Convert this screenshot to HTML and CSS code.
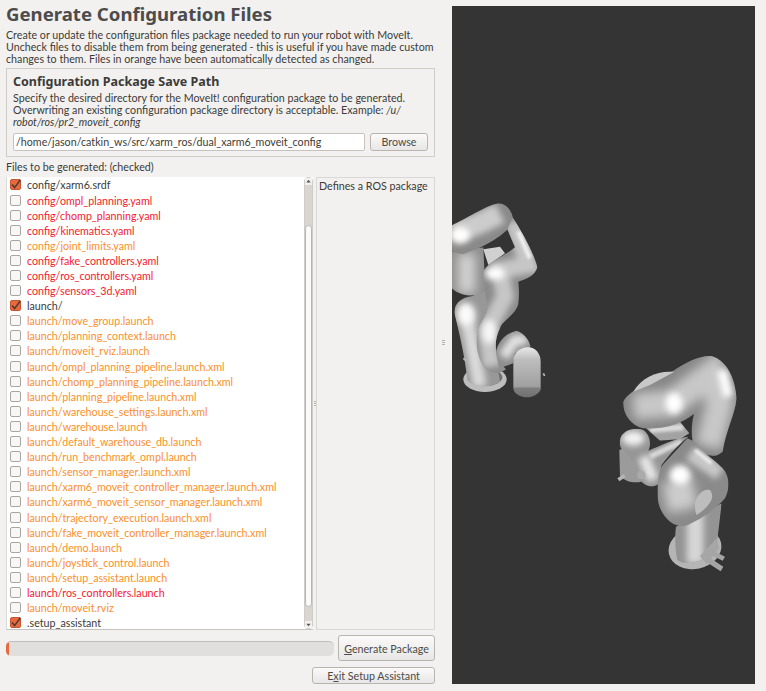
FILE: index.html
```html
<!DOCTYPE html>
<html lang="en">
<head>
<meta charset="utf-8">
<title>Generate Configuration Files</title>
<link rel="stylesheet" href="styles.css">
</head>
<body>
<div class="app">
  <main class="left">
    <h1 class="title">Generate Configuration Files</h1>
    <p class="intro">Create or update the configuration files package needed to run your robot with MoveIt.<br>Uncheck files to disable them from being generated - this is useful if you have made custom<br>changes to them. Files in orange have been automatically detected as changed.</p>
    <section class="group">
      <h2 class="group-title">Configuration Package Save Path</h2>
      <p class="group-text">Specify the desired directory for the MoveIt! configuration package to be generated.<br>Overwriting an existing configuration package directory is acceptable. Example: <em>/u/<br>robot/ros/pr2_moveit_config</em></p>
      <div class="path-row">
        <div class="path-input">/home/jason/catkin_ws/src/xarm_ros/dual_xarm6_moveit_config</div>
        <button class="btn browse">Browse</button>
      </div>
    </section>
    <div class="files-label">Files to be generated: (checked)</div>
    <div class="files">
      <div class="list-wrap">
        <ul class="list">
          <li class="row"><span class="cb on"><svg viewBox="0 0 11 11"><path d="M2 5.5 4.6 8.6 10.4 0.8" fill="none" stroke="#4a3a34" stroke-width="1.5"/></svg></span>config/xarm6.srdf</li>
          <li class="row red"><span class="cb"></span>config/ompl_planning.yaml</li>
          <li class="row red"><span class="cb"></span>config/chomp_planning.yaml</li>
          <li class="row red"><span class="cb"></span>config/kinematics.yaml</li>
          <li class="row orange"><span class="cb"></span>config/joint_limits.yaml</li>
          <li class="row red"><span class="cb"></span>config/fake_controllers.yaml</li>
          <li class="row red"><span class="cb"></span>config/ros_controllers.yaml</li>
          <li class="row red"><span class="cb"></span>config/sensors_3d.yaml</li>
          <li class="row"><span class="cb on"><svg viewBox="0 0 11 11"><path d="M2 5.5 4.6 8.6 10.4 0.8" fill="none" stroke="#4a3a34" stroke-width="1.5"/></svg></span>launch/</li>
          <li class="row orange"><span class="cb"></span>launch/move_group.launch</li>
          <li class="row orange"><span class="cb"></span>launch/planning_context.launch</li>
          <li class="row orange"><span class="cb"></span>launch/moveit_rviz.launch</li>
          <li class="row orange"><span class="cb"></span>launch/ompl_planning_pipeline.launch.xml</li>
          <li class="row orange"><span class="cb"></span>launch/chomp_planning_pipeline.launch.xml</li>
          <li class="row orange"><span class="cb"></span>launch/planning_pipeline.launch.xml</li>
          <li class="row orange"><span class="cb"></span>launch/warehouse_settings.launch.xml</li>
          <li class="row orange"><span class="cb"></span>launch/warehouse.launch</li>
          <li class="row orange"><span class="cb"></span>launch/default_warehouse_db.launch</li>
          <li class="row orange"><span class="cb"></span>launch/run_benchmark_ompl.launch</li>
          <li class="row orange"><span class="cb"></span>launch/sensor_manager.launch.xml</li>
          <li class="row orange"><span class="cb"></span>launch/xarm6_moveit_controller_manager.launch.xml</li>
          <li class="row orange"><span class="cb"></span>launch/xarm6_moveit_sensor_manager.launch.xml</li>
          <li class="row orange"><span class="cb"></span>launch/trajectory_execution.launch.xml</li>
          <li class="row orange"><span class="cb"></span>launch/fake_moveit_controller_manager.launch.xml</li>
          <li class="row orange"><span class="cb"></span>launch/demo.launch</li>
          <li class="row orange"><span class="cb"></span>launch/joystick_control.launch</li>
          <li class="row orange"><span class="cb"></span>launch/setup_assistant.launch</li>
          <li class="row red"><span class="cb"></span>launch/ros_controllers.launch</li>
          <li class="row orange"><span class="cb"></span>launch/moveit.rviz</li>
          <li class="row"><span class="cb on"><svg viewBox="0 0 11 11"><path d="M2 5.5 4.6 8.6 10.4 0.8" fill="none" stroke="#4a3a34" stroke-width="1.5"/></svg></span>.setup_assistant</li>
        </ul>
        <div class="scrollbar">
          <svg class="arrow" viewBox="0 0 8 8"><path d="M1.5 5H6.5L4 2Z" fill="#555"/></svg>
          <div class="thumb"></div>
          <svg class="arrow" viewBox="0 0 8 8"><path d="M1.5 3H6.5L4 6Z" fill="#555"/></svg>
        </div>
      </div>
      <div class="grip"><span></span><span></span><span></span></div>
      <aside class="desc">Defines a ROS package</aside>
    </div>
    <div class="progress-row">
      <div class="progress"><div class="progress-fill"></div></div>
      <button class="btn generate"><span><u>G</u>enerate Package</span></button>
    </div>
    <div class="exit-row">
      <button class="btn exit">E<u>x</u>it Setup Assistant</button>
    </div>
  </main>
  <div class="splitter"><span></span><span></span><span></span></div>
  <div class="viewer">
    <svg class="scene" viewBox="452 6 303 678" preserveAspectRatio="none">
      <defs>
        <filter id="b4" filterUnits="userSpaceOnUse" x="-100" y="-100" width="700" height="950"><feGaussianBlur stdDeviation="5"/></filter>
        <filter id="b8" filterUnits="userSpaceOnUse" x="-100" y="-100" width="700" height="950"><feGaussianBlur stdDeviation="10"/></filter>
        <filter id="b14" filterUnits="userSpaceOnUse" x="-100" y="-100" width="700" height="950"><feGaussianBlur stdDeviation="16"/></filter>
        <linearGradient id="cap" x1="0" x2="0" y1="0" y2="1">
          <stop offset="0" stop-color="#e8e8e8"/><stop offset=".25" stop-color="#bdbdbd"/><stop offset=".78" stop-color="#a0a0a0"/><stop offset=".82" stop-color="#7e7e7e"/><stop offset="1" stop-color="#707070"/>
        </linearGradient>
        <clipPath id="l-col"><path d="M52 570C45 500 28 430 14 372 10 345 30 322 68 318L112 295 125 420 150 575C120 595 75 595 52 570Z"/></clipPath>
        <clipPath id="l-back"><path d="M0 185 100 172 106 300C85 322 35 325 0 290Z"/></clipPath>
        <clipPath id="l-top"><path d="M0 108C45 90 100 50 145 40 170 40 188 65 190 92 178 128 110 170 40 192 20 192 5 185 0 175Z"/></clipPath>
        <clipPath id="l-mid"><path d="M100 250C100 222 170 195 195 172L172 118 188 82C215 125 252 190 262 232 255 258 225 270 205 275 208 300 207 322 205 342 195 378 155 392 150 415 130 455 132 500 168 538 150 552 125 552 105 535 85 510 72 460 85 415 95 390 115 370 112 350L102 290Z"/></clipPath>
        <clipPath id="l-wrist"><path d="M138 490C140 460 165 430 200 422 225 430 240 455 242 472L195 490 190 520 148 535Z"/></clipPath>
        <clipPath id="r-top"><path d="M70 185C85 150 180 110 220 92 260 65 300 45 335 48 375 60 405 105 410 175 405 225 378 270 368 335 340 360 310 345 280 312 272 280 275 250 282 222 245 250 200 268 130 265 90 255 68 220 70 185Z"/></clipPath>
        <clipPath id="r-elbow"><path d="M173 470C172 430 175 395 188 375L262 295 285 305C315 345 345 360 368 385 390 410 390 445 375 475 340 515 290 545 255 558 215 565 175 520 173 470Z"/></clipPath>
        <clipPath id="r-col"><path d="M228 560 365 490 352 600 322 650C290 672 250 675 232 660 225 630 224 590 228 560Z"/></clipPath>
        <clipPath id="r-fore"><path d="M60 300C65 270 105 260 130 270 150 285 155 310 145 332 185 315 225 295 265 290 240 310 210 340 185 375L175 432C160 445 135 440 120 420 115 385 95 345 65 328 60 320 58 310 60 300Z"/></clipPath>
        <clipPath id="r-neck"><path d="M135 262 240 245 268 280 240 297 180 302Z"/></clipPath>
      </defs>

      <!-- left robot, drawn in 3x coordinates -->
      <g transform="translate(450 190) scale(.3333)">
        <ellipse cx="105" cy="568" rx="65" ry="38" fill="#bdbdbd"/>
        <ellipse cx="105" cy="562" rx="52" ry="26" fill="#6e6e6e"/>
        <g clip-path="url(#l-col)">
          <rect x="0" y="290" width="170" height="310" fill="#989898"/>
          <path d="M50 380 90 590" stroke="#dadada" stroke-width="40" filter="url(#b8)"/>
          <ellipse cx="48" cy="372" rx="28" ry="34" fill="#fbfbfb" filter="url(#b8)"/>
        </g>
        <g clip-path="url(#l-back)">
          <rect x="0" y="170" width="110" height="160" fill="#8e8e8e"/>
          <path d="M50 190V310" stroke="#d2d2d2" stroke-width="52" filter="url(#b14)"/>
        </g>
        <path d="M100 178 150 170 165 190 115 225Z" fill="#d0d0d0"/>
        <g clip-path="url(#l-top)">
          <rect x="0" y="30" width="200" height="170" fill="#8a8a8a"/>
          <path d="M10 130 90 100 150 70" stroke="#cccccc" stroke-width="64" fill="none" filter="url(#b8)"/>
          <ellipse cx="30" cy="135" rx="30" ry="24" fill="#fff" filter="url(#b8)"/>
        </g>
        <g clip-path="url(#l-mid)">
          <rect x="60" y="80" width="210" height="480" fill="#8c8c8c"/>
          <path d="M190 95 235 225 150 240 165 320 110 420 125 530" stroke="#c6c6c6" stroke-width="52" fill="none" filter="url(#b8)"/>
          <ellipse cx="135" cy="250" rx="30" ry="20" fill="#fff" filter="url(#b8)"/>
          <path d="M205 125 240 205" stroke="#f4f4f4" stroke-width="12" filter="url(#b4)"/>
          <ellipse cx="118" cy="425" rx="22" ry="36" fill="#f6f6f6" filter="url(#b8)"/>
        </g>
        <g clip-path="url(#l-wrist)">
          <rect x="130" y="415" width="120" height="125" fill="#8e8e8e"/>
          <path d="M160 500 195 450 230 450" stroke="#e2e2e2" stroke-width="32" fill="none" filter="url(#b8)"/>
        </g>
        <path d="M190 515C190 480 220 472 235 472 255 472 272 490 272 515V598C265 620 225 632 200 612 192 605 190 600 190 590Z" fill="url(#cap)"/>
        <path d="M40 505 48 512M280 550 284 558" stroke="#bbb" stroke-width="5"/>
      </g>

      <!-- right robot, drawn in 3x coordinates -->
      <g transform="translate(600 340) scale(.3333)">
        <ellipse cx="285" cy="625" rx="80" ry="62" fill="#b5b5b5" transform="rotate(-12 285 625)"/>
        <g clip-path="url(#r-col)">
          <rect x="220" y="480" width="150" height="200" fill="#949494"/>
          <path d="M285 510 285 670" stroke="#d6d6d6" stroke-width="50" filter="url(#b8)"/>
        </g>
        <path d="M300 648 350 595 358 625 320 672Z" fill="#a6a6a6"/>
        <path d="M335 630 375 650 368 662 328 642ZM325 650 370 680 362 694 318 665Z" fill="#a5a5a5"/>
        <g clip-path="url(#r-neck)">
          <rect x="130" y="240" width="145" height="65" fill="#a2a2a2"/>
          <path d="M150 270 250 262" stroke="#dcdcdc" stroke-width="18" filter="url(#b4)"/>
        </g>
        <g clip-path="url(#r-top)">
          <rect x="60" y="40" width="360" height="320" fill="#868686"/>
          <path d="M100 200 215 190 335 100 360 190 325 320" stroke="#c8c8c8" stroke-width="80" fill="none" filter="url(#b14)"/>
          <ellipse cx="222" cy="190" rx="26" ry="32" fill="#fff" filter="url(#b8)"/>
          <path d="M365 90 385 170" stroke="#fff" stroke-width="30" filter="url(#b8)"/>
        </g>
        <path d="M100 155C125 110 180 90 222 96L150 135Z" fill="#c8c8c8"/>
        <path d="M58 330 60 408C75 425 100 430 125 425L125 390 85 320Z" fill="#9b9b9b"/>
        <g clip-path="url(#r-fore)">
          <rect x="50" y="260" width="220" height="190" fill="#969696"/>
          <ellipse cx="100" cy="295" rx="34" ry="22" fill="#f2f2f2" filter="url(#b8)"/>
          <path d="M130 350 160 420" stroke="#e6e6e6" stroke-width="34" filter="url(#b8)"/>
          <path d="M150 350 245 305" stroke="#d8d8d8" stroke-width="18" filter="url(#b4)"/>
        </g>
        <path d="M52 415 72 402 76 412 58 424Z" fill="#b5b5b5"/>
        <circle cx="124" cy="405" r="13" fill="#aaa"/>
        <g clip-path="url(#r-elbow)">
          <rect x="165" y="290" width="230" height="280" fill="#8a8a8a"/>
          <path d="M230 420 250 510" stroke="#cccccc" stroke-width="90" filter="url(#b14)"/>
          <path d="M270 340 360 400" stroke="#c8c8c8" stroke-width="44" filter="url(#b8)"/>
          <ellipse cx="240" cy="405" rx="32" ry="30" fill="#fff" filter="url(#b8)"/>
          <path d="M285 330 335 370" stroke="#f6f6f6" stroke-width="10" filter="url(#b4)"/>
        </g>
        <path d="M285 490C290 465 310 445 330 450 345 470 335 495 290 525 285 515 284 500 285 490Z" fill="#bdbdbd"/>
      </g>
    </svg>
  </div>
</div>
</body>
</html>
```
FILE: styles.css
```css
* { box-sizing: border-box; }
html, body { margin: 0; height: 100%; }
body {
  width: 766px;
  height: 691px;
  overflow: hidden;
  background: #f2f1f0;
  color: #3c3b37;
  font-family: Lato, "Noto Sans", sans-serif;
  font-size: 10.7px;
}
.app {
  display: flex;
  height: 691px;
  padding: 0 11px 7px 6px;
}
.left {
  width: 429px;
  display: flex;
  flex-direction: column;
}
.left > * { flex: none; }
.title {
  margin: 2px 0 0;
  font-family: "Noto Sans", sans-serif;
  font-size: 18.6px;
  line-height: 24px;
  font-weight: 700;
  color: #4c4c4c;
}
.intro {
  margin: 3px 0 0;
  line-height: 11.8px;
  white-space: nowrap;
}
.group {
  margin-top: 4px;
  height: 89px;
  padding: 5px 6px 0;
  border: 1px solid #cfccc8;
}
.group-title {
  margin: 0;
  font-family: "Noto Sans", sans-serif;
  font-size: 12.5px;
  line-height: 16px;
  font-weight: 700;
}
.group-text {
  margin: 2px 0 0;
  line-height: 11.8px;
  white-space: nowrap;
}
.path-row {
  display: flex;
  gap: 5px;
  margin-top: 5px;
}
.path-input {
  width: 352px;
  height: 18px;
  padding: 0 2px;
  line-height: 16px;
  background: #fff;
  border: 1px solid #c6c3bf;
  border-radius: 2px;
  white-space: nowrap;
}
.btn {
  padding: 0;
  font: inherit;
  color: #4c4b47;
  background: linear-gradient(#fbfaf9, #e9e7e5);
  border: 1px solid #b8b5b1;
  border-radius: 3px;
}
.browse { width: 58px; height: 18px; }
.files-label { line-height: 20px; height: 20px; }
.files {
  display: flex;
  height: 453px;
}
.list-wrap {
  display: flex;
  width: 307px;
  background: #fff;
  border-bottom: 1px solid #c6c3bf;
  border-left: 1px solid #dcdad7;
}
.list {
  flex: 1;
  margin: 0;
  padding: 0;
  list-style: none;
  overflow: hidden;
}
.row {
  display: flex;
  align-items: center;
  gap: 6px;
  height: 15.1px;
  padding-left: 3px;
  white-space: nowrap;
}
.red { color: #f7192c; }
.orange { color: #fb8f2a; }
.cb {
  flex: none;
  width: 11px;
  height: 11px;
  background: #f8f7f6;
  border: 1px solid #a9a6a2;
  border-radius: 2px;
}
.cb.on {
  background: #e9693f;
  border-color: #c9552f;
}
.cb svg { display: block; width: 11px; height: 11px; margin: -1px 0 0 -1px; }
.scrollbar {
  width: 9px;
  display: flex;
  flex-direction: column;
  background: #d9d6d2;
  border: 1px solid #cfccc8;
  border-radius: 4px;
}
.arrow { width: 7px; height: 7px; flex: none; background: #f2f1f0; }
.thumb {
  margin-top: 40px;
  margin-bottom: 14px;
  flex: 1;
  background: #fbfafa;
  border: 1px solid #b9b6b2;
  border-radius: 4px;
}
.grip {
  width: 3px;
  display: flex;
  flex-direction: column;
  align-items: center;
  justify-content: center;
  gap: 1px;
}
.grip span { width: 2px; height: 1px; background: #b5b2ae; }
.desc {
  flex: 1;
  padding: 1px 2px;
  line-height: 14px;
  border: 1px solid #dad8d5;
  white-space: nowrap;
}
.progress-row {
  display: flex;
  align-items: center;
  justify-content: space-between;
  margin-top: 5px;
}
.progress {
  width: 328px;
  height: 15px;
  background: #e0dfdd;
  border-top: 1px solid #c2bfbb;
  border-radius: 5px;
  overflow: hidden;
}
.progress-fill { width: 3px; height: 14px; background: #e9693f; }
.generate { width: 97px; height: 26px; }
.exit-row { display: flex; justify-content: flex-end; margin-top: 6px; }
.exit { width: 123px; height: 17px; }
.splitter {
  width: 17px;
  display: flex;
  flex-direction: column;
  align-items: center;
  justify-content: center;
  gap: 1px;
}
.splitter span { width: 3px; height: 1px; background: #b5b2ae; }
.viewer {
  width: 303px;
  height: 678px;
  margin-top: 6px;
  background: #343434;
}
.scene { display: block; width: 303px; height: 678px; }
```
